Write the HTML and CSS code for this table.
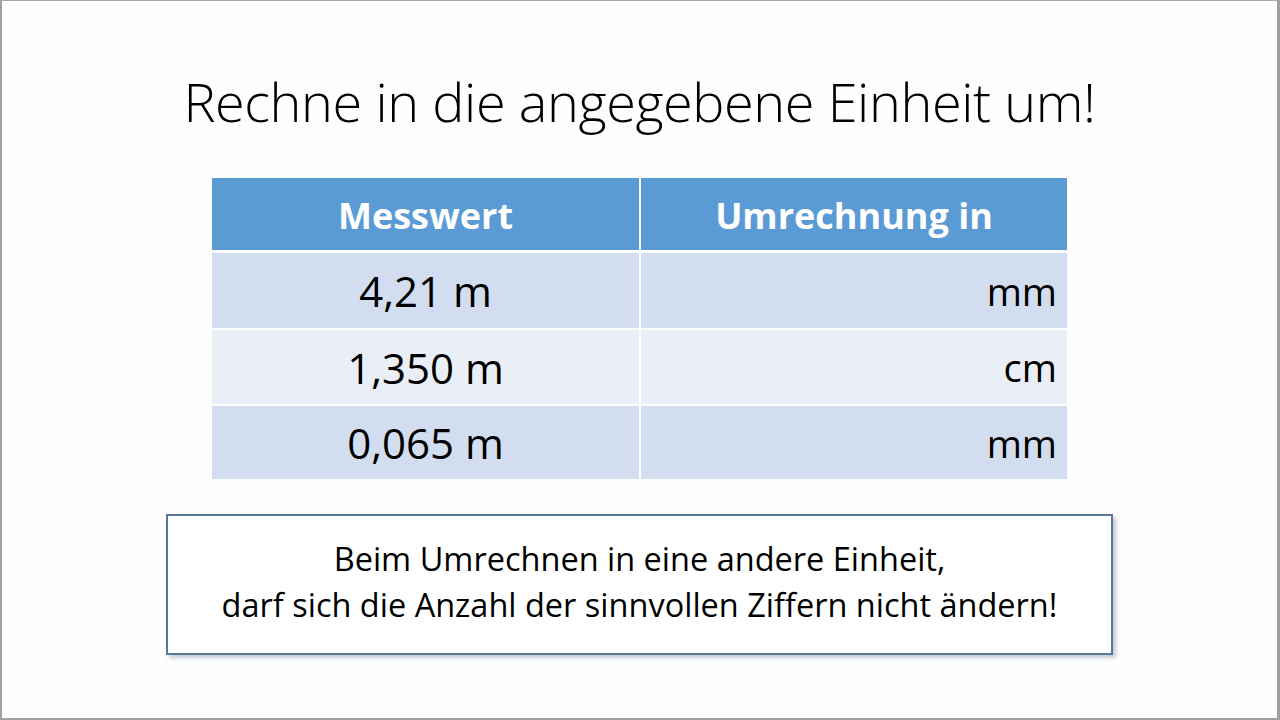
FILE: index.html
```html
<!DOCTYPE html>
<html lang="de">
<head>
<meta charset="utf-8">
<title>Rechne in die angegebene Einheit um!</title>
<link rel="stylesheet" href="styles.css">
</head>
<body>
<div class="slide">
  <h1 class="title">Rechne in die angegebene Einheit um!</h1>
  <div class="table">
    <div class="cell head">Messwert</div>
    <div class="cell head">Umrechnung in</div>
    <div class="cell val odd">4,21 m</div>
    <div class="cell unit odd">mm</div>
    <div class="cell val even">1,350 m</div>
    <div class="cell unit even">cm</div>
    <div class="cell val odd">0,065 m</div>
    <div class="cell unit odd">mm</div>
  </div>
  <div class="note">
    <p class="note-line">Beim Umrechnen in eine andere Einheit,</p>
    <p class="note-line">darf sich die Anzahl der sinnvollen Ziffern nicht ändern!</p>
  </div>
</div>
</body>
</html>
```

FILE: styles.css
```css
html, body {
  margin: 0;
  padding: 0;
  background: #ffffff;
}
.slide {
  box-sizing: border-box;
  width: 1280px;
  height: 720px;
  border-top: 1px solid #a8a8a8;
  border-left: 2px solid #a0a0a0;
  border-right: 3px solid #a0a0a0;
  border-bottom: 2px solid #a0a0a0;
  background: #fefefe;
  display: flex;
  flex-direction: column;
  align-items: center;
  font-family: "Open Sans", "Liberation Sans", sans-serif;
  color: #000;
}
.title {
  margin: 63px 0 0 0;
  font-weight: 300;
  font-size: 54px;
  line-height: 74px;
  letter-spacing: -0.4px;
  height: 114px;
}
.table {
  display: grid;
  grid-template-columns: 427px 426px;
  grid-template-rows: 73px 75px 74px 73px;
  column-gap: 2px;
  row-gap: 2px;
  width: 855px;
}
.table .head {
  margin-bottom: 1px;
}
.cell {
  display: flex;
  align-items: center;
  font-size: 42px;
}
.head {
  background: #5b9bd5;
  color: #ffffff;
  font-weight: 700;
  font-size: 36px;
  justify-content: center;
  padding-top: 3px;
  box-sizing: border-box;
}
.val {
  justify-content: center;
}
.unit {
  justify-content: flex-end;
  padding-right: 10px;
  font-size: 38px;
}
.odd {
  background: #d2deef;
}
.even {
  background: #eaeff7;
}
.note {
  margin-top: 35px;
  box-sizing: border-box;
  width: 947px;
  height: 141px;
  padding-bottom: 6px;
  border: 2px solid #5a7799;
  box-shadow: 3px 3px 4px rgba(90, 110, 140, 0.35);
  background: #ffffff;
  display: flex;
  flex-direction: column;
  justify-content: center;
  align-items: center;
}
.note-line {
  margin: 0;
  font-size: 32.5px;
  line-height: 46px;
}
```
